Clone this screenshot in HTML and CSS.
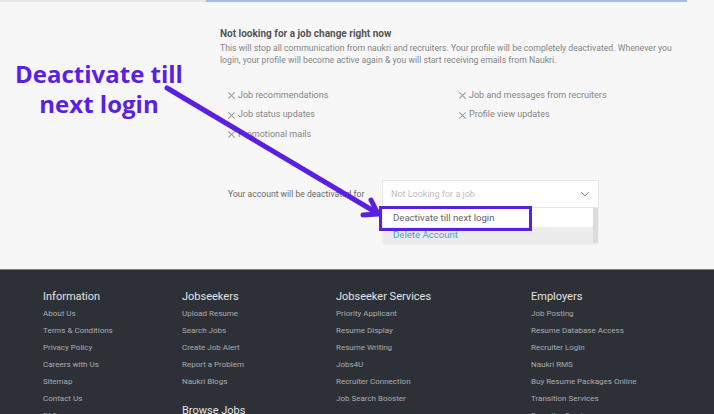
FILE: index.html
```html
<!DOCTYPE html>
<html>
<head>
<meta charset="utf-8">
<link rel="stylesheet" href="styles.css">
</head>
<body>
<div class="page">
  <section class="main">
    <div class="topstrip"><span class="strip-left"></span><span class="strip-blue"></span></div>
    <div class="content">
      <h2 class="title">Not looking for a job change right now</h2>
      <p class="desc">This will stop all communication from naukri and recruiters. Your profile will be completely deactivated. Whenever you<br>login, your profile will become active again &amp; you will start receiving emails from Naukri.</p>
      <ul class="list">
        <li><span class="x"></span>Job recommendations</li>
        <li><span class="x"></span>Job and messages from recruiters</li>
        <li><span class="x"></span>Job status updates</li>
        <li><span class="x"></span>Profile view updates</li>
        <li><span class="x"></span>Promotional mails</li>
      </ul>
      <div class="account">
        <span class="label">Your account will be deactivated for</span>
        <div class="select">
          <span class="placeholder">Not Looking for a job</span>
          <svg class="chev" width="10" height="6" viewBox="0 0 10 6"><path d="M1 1 L5 5 L9 1" fill="none" stroke="#9a9a9a" stroke-width="1"/></svg>
          <div class="menu">
            <div class="opt">Deactivate till next login</div>
            <div class="opt opt-del">Delete Account</div>
            <span class="scroll"></span>
          </div>
        </div>
      </div>
    </div>
    <div class="note">Deactivate till<br>next login</div>
    <div class="hl"></div>
    <svg class="arrow" width="714" height="269" viewBox="0 0 714 269">
      <g fill="none" stroke="#5a1fe3" stroke-width="5" stroke-linecap="round" stroke-linejoin="round">
        <path d="M167 88 L377 213"/>
        <path d="M363 215 L378 214 L371 200"/>
      </g>
    </svg>
  </section>
  <footer class="footer">
    <div class="col">
      <h3>Information</h3>
      <a>About Us</a><a>Terms &amp; Conditions</a><a>Privacy Policy</a><a>Careers with Us</a><a>Sitemap</a><a>Contact Us</a><a>FAQs</a>
    </div>
    <div class="col">
      <h3>Jobseekers</h3>
      <a>Upload Resume</a><a>Search Jobs</a><a>Create Job Alert</a><a>Report a Problem</a><a>Naukri Blogs</a>
      <h3 class="sub">Browse Jobs</h3>
    </div>
    <div class="col">
      <h3>Jobseeker Services</h3>
      <a>Priority Applicant</a><a>Resume Display</a><a>Resume Writing</a><a>Jobs4U</a><a>Recruiter Connection</a><a>Job Search Booster</a>
    </div>
    <div class="col">
      <h3>Employers</h3>
      <a>Job Posting</a><a>Resume Database Access</a><a>Recruiter Login</a><a>Naukri RMS</a><a>Buy Resume Packages Online</a><a>Transition Services</a><a>Recruiter Services</a>
    </div>
  </footer>
</div>
</body>
</html>
```
FILE: styles.css
```css
* { box-sizing: border-box; }
html, body { margin: 0; padding: 0; }
body { width: 714px; height: 414px; overflow: hidden; font-family: Roboto, "Liberation Sans", Arial, sans-serif; background: #f7f7f7; }
.page { width: 714px; height: 414px; overflow: hidden; }
.main { position: relative; height: 269px; background: #f7f7f7; }
.topstrip { display: flex; height: 2px; }
.strip-left { width: 206px; background: #e6e6e6; }
.strip-blue { width: 481px; background: #a7bce6; }
.content { padding: 25px 0 0 220px; }
.title { margin: 0; font-size: 10px; line-height: 14px; font-weight: 700; color: #555; }
.desc { margin: 1px 0 0; font-size: 8.7px; line-height: 12px; color: #858585; white-space: nowrap; }
.list { list-style: none; margin: 19px 0 0 8px; padding: 0; display: grid; grid-template-columns: 231px 200px; grid-auto-rows: 19.5px; }
.list li { display: flex; align-items: center; font-size: 9px; color: #858585; }
.x { position: relative; width: 7px; height: 7px; margin-right: 3px; margin-top: 2px; }
.x::before, .x::after { content: ""; position: absolute; left: -1px; top: 3px; width: 9px; height: 1px; background: #9a9a9a; transform: rotate(45deg); }
.x::after { transform: rotate(-45deg); }
.account { display: flex; align-items: center; margin: 36px 0 0 8px; }
.label { width: 154px; font-size: 8.6px; color: #6a6a6a; }
.select { position: relative; display: flex; align-items: center; justify-content: space-between; width: 217px; height: 28px; padding: 0 8px 0 8px; background: #fff; border: 1px solid #e6e6e6; }
.placeholder { font-size: 9px; color: #c0c0c0; }
.chev { margin-top: 1px; }
.menu { position: absolute; left: 0; top: 27px; width: 215px; background: #fff; box-shadow: 0 1px 2px rgba(0,0,0,0.08); }
.opt { height: 19px; padding-left: 10px; display: flex; align-items: center; font-size: 9.6px; color: #666; }
.opt-del { height: 16px; background: #ececec; color: #4aa0d9; }
.scroll { position: absolute; right: 0; top: 0; width: 5px; height: 35px; background: #dcdcdc; }
.note { position: absolute; left: 0; top: 59px; width: 198px; text-align: center; font-family: "Open Sans", sans-serif; font-weight: 700; font-size: 24px; line-height: 30px; color: #5a1fe3; }
.hl { position: absolute; left: 379px; top: 206px; width: 153px; height: 25px; border: 3px solid #5a1fe3; }
.arrow { position: absolute; left: 0; top: 0; }
.footer { display: grid; grid-template-columns: 139px 154px 195px 1fr; height: 145px; padding: 18px 0 0 43px; background: #2d3137; border-top: 1px solid #7d8084; }
.col { display: flex; flex-direction: column; }
.col h3 { margin: 0; font-size: 11px; line-height: 17px; font-weight: 400; color: #e4e4e4; }
.col a { font-size: 8px; line-height: 17px; color: #a9acb0; }
.col h3.sub { margin-top: 12px; }
```
